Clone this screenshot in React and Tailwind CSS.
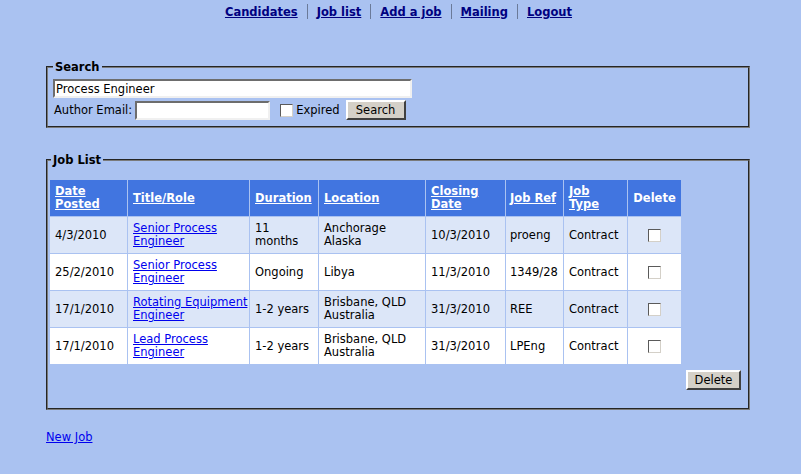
import React from 'react';

const jobs = [
    { posted: '4/3/2010', title: ['Senior Process', 'Engineer'], duration: ['11', 'months'], location: ['Anchorage', 'Alaska'], closing: '10/3/2010', ref: 'proeng', type: 'Contract' },
    { posted: '25/2/2010', title: ['Senior Process', 'Engineer'], duration: ['Ongoing'], location: ['Libya'], closing: '11/3/2010', ref: '1349/28', type: 'Contract' },
    { posted: '17/1/2010', title: ['Rotating Equipment', 'Engineer'], duration: ['1-2 years'], location: ['Brisbane, QLD', 'Australia'], closing: '31/3/2010', ref: 'REE', type: 'Contract' },
    { posted: '17/1/2010', title: ['Lead Process', 'Engineer'], duration: ['1-2 years'], location: ['Brisbane, QLD', 'Australia'], closing: '31/3/2010', ref: 'LPEng', type: 'Contract' },
];

const navLinks = ['Candidates', 'Job list', 'Add a job', 'Mailing', 'Logout'];

const Lines = ({ items }) => items.map((t, i) => (
    <React.Fragment key={i}>
        {i > 0 && <br />}
        {t}
    </React.Fragment>
));

// classic win2k style widgets
const inset = 'border-2 border-t-[#6d6d6d] border-l-[#6d6d6d] border-b-[#f0f0f0] border-r-[#f0f0f0] bg-white';
const outset = 'border-2 border-t-white border-l-white border-b-[#404040] border-r-[#404040] bg-[#d4d0c8]';

const Checkbox = () => (
    <input type="checkbox" className="appearance-none w-[13px] h-[13px] bg-white border border-t-[#5a5a5a] border-l-[#5a5a5a] border-b-[#d4d0c8] border-r-[#d4d0c8] align-middle" />
);

const App = () => {
    return (
        <div className="min-h-screen bg-[#aac2f1] font-['DejaVu_Sans',Verdana,sans-serif] text-[11.5px] leading-[14px] text-black">
            {/* Top nav */}
            <nav className="flex justify-center items-center pt-[3px] h-[20px] -ml-[4px]">
                {navLinks.map((l, i) => (
                    <React.Fragment key={l}>
                        {i > 0 && <span className="w-px h-[15px] bg-[#6b7a99] mx-[9px]"></span>}
                        <a href="#" className="font-bold text-[#000080] underline">{l}</a>
                    </React.Fragment>
                ))}
            </nav>

            {/* Search */}
            <fieldset className="ml-[46px] mt-[40px] w-[704px] border-2 border-[#7a7a7a] [border-style:groove] px-[5px] pt-[5px] pb-[6px]">
                <legend className="px-[2px] font-bold">Search</legend>
                <input type="text" defaultValue="Process Engineer" className={`${inset} block w-[359px] h-[19px] px-[1px] text-[11.5px] outline-none`} />
                <div className="flex items-center mt-[2px]">
                    <span className="ml-[1px]">Author Email:</span>
                    <input type="text" className={`${inset} w-[135px] h-[19px] ml-[3px] outline-none`} />
                    <span className="ml-[10px] flex"><Checkbox /></span>
                    <span className="ml-[3px]">Expired</span>
                    <button className={`${outset} ml-[6px] w-[60px] h-[20px] text-[11.5px] leading-[14px]`}>Search</button>
                </div>
            </fieldset>

            {/* Job list */}
            <fieldset className="ml-[46px] mt-[25px] w-[704px] border-2 border-[#7a7a7a] [border-style:groove] px-[1px] pb-[18px]">
                <legend className="ml-[2px] px-[2px] font-bold">Job List</legend>
                <table className="mt-[12px] w-[633px] table-fixed border-separate border-spacing-[1px] leading-[13px]">
                    <thead>
                        <tr className="bg-[#4175e0] text-white font-bold text-left">
                            <th className="w-[77px] h-[36px] px-[5px] align-middle"><a href="#" className="underline">Date<br />Posted</a></th>
                            <th className="w-[121px] px-[5px]"><a href="#" className="underline">Title/Role</a></th>
                            <th className="w-[68px] px-[5px]"><a href="#" className="underline">Duration</a></th>
                            <th className="w-[106px] px-[5px]"><a href="#" className="underline">Location</a></th>
                            <th className="w-[79px] px-[5px]"><a href="#" className="underline">Closing<br />Date</a></th>
                            <th className="w-[57px] px-[4px] whitespace-nowrap"><a href="#" className="underline">Job Ref</a></th>
                            <th className="w-[63px] px-[5px]"><a href="#" className="underline">Job<br />Type</a></th>
                            <th className="w-[53px] px-[3px] text-center">Delete</th>
                        </tr>
                    </thead>
                    <tbody>
                        {jobs.map((j, i) => (
                            <tr key={i} className={i % 2 === 0 ? 'bg-[#dce6f8]' : 'bg-white'}>
                                <td className="h-[36px] px-[5px] whitespace-nowrap">{j.posted}</td>
                                <td className="pl-[5px] pr-[2px] whitespace-nowrap">
                                    <a href="#" className="text-[#0000ee] underline"><Lines items={j.title} /></a>
                                </td>
                                <td className="px-[5px] whitespace-nowrap"><Lines items={j.duration} /></td>
                                <td className="px-[5px] whitespace-nowrap"><Lines items={j.location} /></td>
                                <td className="px-[5px] whitespace-nowrap">{j.closing}</td>
                                <td className="px-[4px] whitespace-nowrap">{j.ref}</td>
                                <td className="px-[5px] whitespace-nowrap">{j.type}</td>
                                <td className="text-center"><Checkbox /></td>
                            </tr>
                        ))}
                    </tbody>
                </table>
                <div className="flex justify-end mt-[5px] pr-[6px]">
                    <button className={`${outset} w-[55px] h-[20px] text-[11.5px] leading-[14px]`}>Delete</button>
                </div>
            </fieldset>

            <div className="ml-[46px] mt-[20px]">
                <a href="#" className="text-[#0000ee] underline">New Job</a>
            </div>
        </div>
    );
};

export default App;
